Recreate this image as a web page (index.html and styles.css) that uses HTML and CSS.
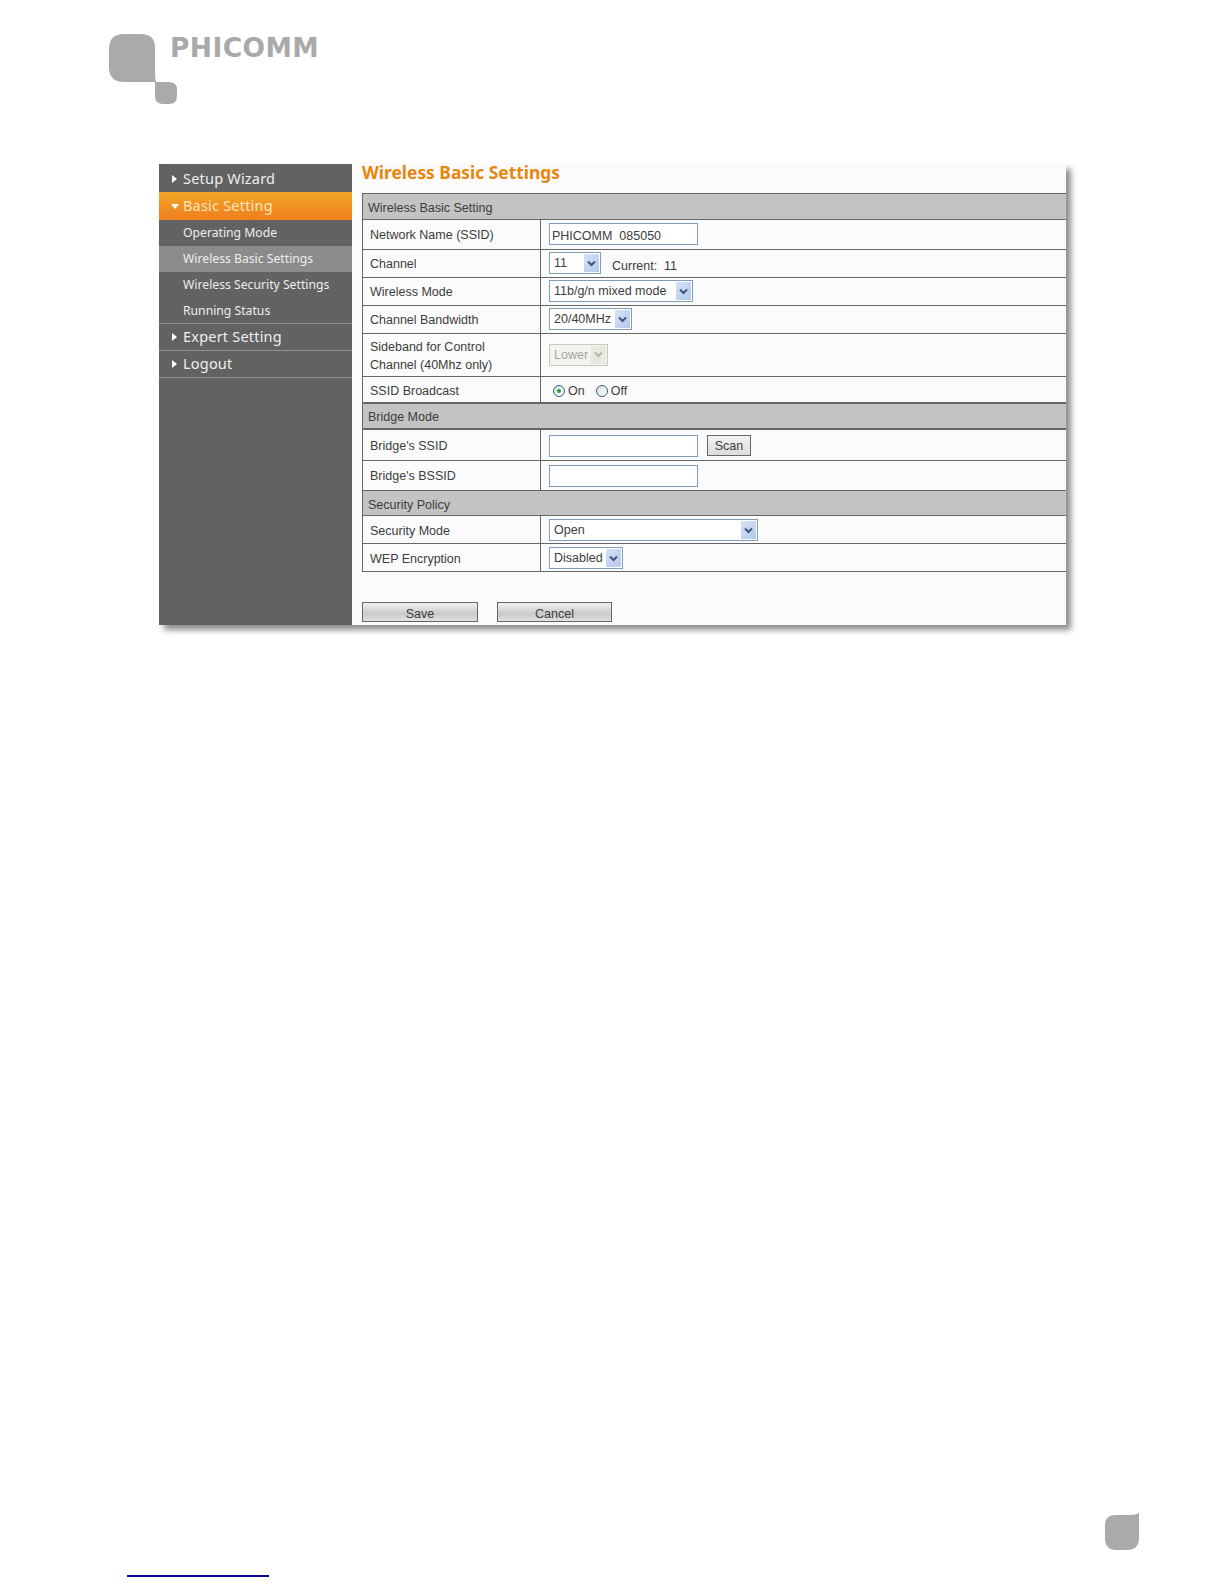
FILE: index.html
```html
<!DOCTYPE html>
<html lang="en">
<head>
<meta charset="utf-8">
<title>PHICOMM Wireless Basic Settings</title>
<link rel="stylesheet" href="styles.css">
</head>
<body>
<div class="page">
  <header class="brand">
    <svg class="logo" width="68" height="70" viewBox="0 0 68 70" aria-hidden="true">
      <path d="M15 0H32Q46 0 46 14V36Q46 44 47 48H15Q0 48 0 33V15Q0 0 15 0Z" fill="#aaa"/>
      <path d="M46 48H60Q68 48 68 56V62Q68 70 60 70H54Q46 70 46 62Z" fill="#aaa"/>
    </svg>
    <span class="logo-text">PHICOMM</span>
  </header>

  <main class="panel">
    <nav class="side">
      <div class="nav-main nav-first"><span class="tri"></span>Setup Wizard</div>
      <div class="nav-main nav-active"><span class="tri tri-down"></span>Basic Setting</div>
      <div class="nav-sub">Operating Mode</div>
      <div class="nav-sub nav-current">Wireless Basic Settings</div>
      <div class="nav-sub">Wireless Security Settings</div>
      <div class="nav-sub nav-last">Running Status</div>
      <div class="nav-main nav-line"><span class="tri"></span>Expert Setting</div>
      <div class="nav-main nav-line"><span class="tri"></span>Logout</div>
    </nav>

    <section class="content">
      <h1 class="title">Wireless Basic Settings</h1>
      <div class="form">
        <div class="head h-first">Wireless Basic Setting</div>

        <div class="row r30">
          <div class="label">Network Name (SSID)</div>
          <div class="field"><span class="input">PHICOMM&nbsp; 085050</span></div>
        </div>
        <div class="row r28">
          <div class="label">Channel</div>
          <div class="field">
            <span class="select w-channel"><span class="sel-text">11</span><span class="arrow"><svg width="9" height="7" viewBox="0 0 9 7"><path d="M1 1.500L4.500 5L8 1.500" fill="none" stroke="#3f5683" stroke-width="2"/></svg></span></span>
            <span class="current">Current:&nbsp; 11</span>
          </div>
        </div>
        <div class="row r28">
          <div class="label">Wireless Mode</div>
          <div class="field">
            <span class="select w-mode"><span class="sel-text">11b/g/n mixed mode</span><span class="arrow"><svg width="9" height="7" viewBox="0 0 9 7"><path d="M1 1.500L4.500 5L8 1.500" fill="none" stroke="#3f5683" stroke-width="2"/></svg></span></span>
          </div>
        </div>
        <div class="row r28">
          <div class="label">Channel Bandwidth</div>
          <div class="field">
            <span class="select w-band"><span class="sel-text">20/40MHz</span><span class="arrow"><svg width="9" height="7" viewBox="0 0 9 7"><path d="M1 1.500L4.500 5L8 1.500" fill="none" stroke="#3f5683" stroke-width="2"/></svg></span></span>
          </div>
        </div>
        <div class="row r43">
          <div class="label label-two">Sideband for Control<br>Channel (40Mhz only)</div>
          <div class="field">
            <span class="select w-lower disabled"><span class="sel-text">Lower</span><span class="arrow"><svg width="9" height="7" viewBox="0 0 9 7"><path d="M1 1.500L4.500 5L8 1.500" fill="none" stroke="#b5b5ad" stroke-width="2"/></svg></span></span>
          </div>
        </div>
        <div class="row r27">
          <div class="label label-low">SSID Broadcast</div>
          <div class="field radios">
            <span class="radio radio-on"></span><span class="radio-label">On</span>
            <span class="radio radio-off"></span><span>Off</span>
          </div>
        </div>

        <div class="head h-bridge">Bridge Mode</div>
        <div class="row r31">
          <div class="label label-low">Bridge's SSID</div>
          <div class="field field-low"><span class="input blank"></span><span class="scan">Scan</span></div>
        </div>
        <div class="row r30">
          <div class="label">Bridge's BSSID</div>
          <div class="field field-flat"><span class="input blank"></span></div>
        </div>

        <div class="head h-sec">Security Policy</div>
        <div class="row r28">
          <div class="label label-low">Security Mode</div>
          <div class="field field-flat">
            <span class="select w-sec"><span class="sel-text">Open</span><span class="arrow"><svg width="9" height="7" viewBox="0 0 9 7"><path d="M1 1.500L4.500 5L8 1.500" fill="none" stroke="#3f5683" stroke-width="2"/></svg></span></span>
          </div>
        </div>
        <div class="row r28">
          <div class="label label-low">WEP Encryption</div>
          <div class="field field-flat">
            <span class="select w-wep"><span class="sel-text">Disabled</span><span class="arrow"><svg width="9" height="7" viewBox="0 0 9 7"><path d="M1 1.500L4.500 5L8 1.500" fill="none" stroke="#3f5683" stroke-width="2"/></svg></span></span>
          </div>
        </div>
      </div>
      <div class="actions">
        <span class="btn btn-save">Save</span>
        <span class="btn btn-cancel">Cancel</span>
      </div>
    </section>
  </main>

  <footer class="foot">
    <svg class="leaf" width="36" height="38" viewBox="0 0 36 38"><path d="M11 2H22Q32 2 35 0V25Q35 37 23 37H12Q1 37 1 25V12Q1 2 11 2Z" fill="#aaa"/></svg>
    <div class="foot-line"></div>
  </footer>
</div>
</body>
</html>
```

FILE: styles.css
```css
* { box-sizing: border-box; }
html, body { margin: 0; padding: 0; background: #fff; }
.page { width: 1224px; height: 1584px; overflow: hidden; font-family: "Liberation Sans", Arial, sans-serif; }

.brand { display: flex; align-items: flex-start; height: 164px; padding: 34px 0 0 109px; }
.logo { display: block; flex: none; }
.logo-text { margin-left: -7px; font: 700 26.500px/28px "DejaVu Sans", Verdana, sans-serif; letter-spacing: .4px; color: #a9a9a9; white-space: nowrap; }

.panel { display: flex; width: 907px; height: 461px; margin-left: 159px; background: #fbfbfb; box-shadow: 5px 5px 6px rgba(0,0,0,.45); }

.side { flex: 0 0 193px; background: #626262; color: #eee; font-family: "Noto Sans", Tahoma, sans-serif; }
.nav-main { display: flex; align-items: center; height: 28px; padding: 0 0 3px 13px; font-size: 14.500px; letter-spacing: .2px; }
.nav-first { padding: 0 0 1px 13px; }
.nav-active { background: linear-gradient(#f4a726, #ee7d1e); color: #ffe4bd; }
.nav-line { height: 27px; border-bottom: 1px solid #929292; }
.tri { width: 0; height: 0; margin: 3px 6px 0 0; border-style: solid; border-width: 4px 0 4px 5px; border-color: transparent transparent transparent #fff; }
.tri-down { margin: 3px 4px 0 -1px; border-width: 5px 4px 0 4px; border-color: #fff transparent transparent transparent; }
.nav-sub { display: flex; align-items: center; height: 26px; padding: 0 0 2px 24px; font-size: 12.200px; }
.nav-current { background: #8b8b8b; }
.nav-last { padding-bottom: 1px; border-bottom: 1px solid #929292; }

.content { flex: 1; padding: 0 0 0 10px; color: #3c3c3c; font-size: 12.500px; }
.title { height: 29px; margin: 0; font: 700 17.400px/17px "Noto Sans", Tahoma, sans-serif; color: #e8860f; }
.form { border-left: 1px solid #666; }
.head { display: flex; align-items: center; padding-left: 5px; background: #c3c3c3; border-bottom: 1px solid #666; }
.h-first { height: 27px; padding-top: 2px; border-top: 1px solid #666; }
.h-bridge { height: 26px; padding-top: 2px; border-bottom-width: 2px; }
.h-sec { height: 25px; padding-top: 3px; }

.row { display: grid; grid-template-columns: 178px 1fr; border-bottom: 1px solid #666; }
.r27 { height: 27px; border-bottom-width: 2px; }
.r28 { height: 28px; }
.r30 { height: 30px; }
.r31 { height: 31px; }
.r43 { height: 43px; }

.label { display: flex; align-items: center; padding: 0 0 0 7px; border-right: 1px solid #666; }
.label-low { padding-top: 2px; }
.label-two { display: block; padding-top: 4px; line-height: 18px; }
.field { display: flex; align-items: center; padding: 0 0 1px 8px; }
.field-low { padding: 2px 0 0 8px; }
.field-flat { padding: 1px 0 0 8px; }

.input { display: block; width: 149px; height: 22px; padding: 4px 0 0 2px; border: 1px solid #7f9db9; background: #fff; line-height: 16px; }

.select { display: flex; align-items: stretch; height: 22px; border: 1px solid #7f9db9; background: #fff; }
.sel-text { flex: 1; padding: 0 0 0 4px; line-height: 20px; white-space: nowrap; overflow: hidden; }
.arrow { display: flex; flex: 0 0 15px; align-items: center; justify-content: center; margin: 1px; background: linear-gradient(135deg, #d6e2f6, #b4c8ea); }
.w-channel { width: 52px; }
.w-mode { width: 144px; }
.w-band { width: 83px; }
.w-lower { width: 59px; }
.w-sec { width: 209px; }
.w-wep { width: 74px; }
.disabled { border-color: #c9c7ba; background: #f4f4ef; color: #a3a39b; }
.disabled .arrow { background: #e9e8e0; }

.current { margin-left: 11px; padding-top: 5px; }

.radios { padding: 3px 0 0 12px; }
.radio { position: relative; display: block; width: 12px; height: 12px; border-radius: 50%; border: 1px solid #2c628b; background: linear-gradient(135deg, #dcdcd6, #fff); }
.radio-on::after { content: ""; position: absolute; left: 3px; top: 3px; width: 4px; height: 4px; border-radius: 50%; background: #2f9a3b; }
.radio-label { margin: 0 11px 0 3px; }
.radio-off { margin-right: 3px; }

.scan { display: block; width: 44px; height: 21px; margin: -1px 0 0 9px; border: 1px solid #666; background: linear-gradient(#f3f3f3, #dcdcdc); text-align: center; line-height: 21px; }

.actions { display: flex; gap: 19px; padding-top: 30px; }
.btn { display: block; width: 116px; height: 20px; border: 1px solid #666; background: linear-gradient(#f2f2f2, #c9c9c9 60%, #e2e2e2); text-align: center; line-height: 23px; }
.btn-cancel { width: 115px; }

.foot { padding: 888px 0 0 0; }
.leaf { display: block; margin-left: 1104px; }
.foot-line { width: 142px; height: 2px; margin: 24px 0 0 127px; background: #0a0a9c; }
```
